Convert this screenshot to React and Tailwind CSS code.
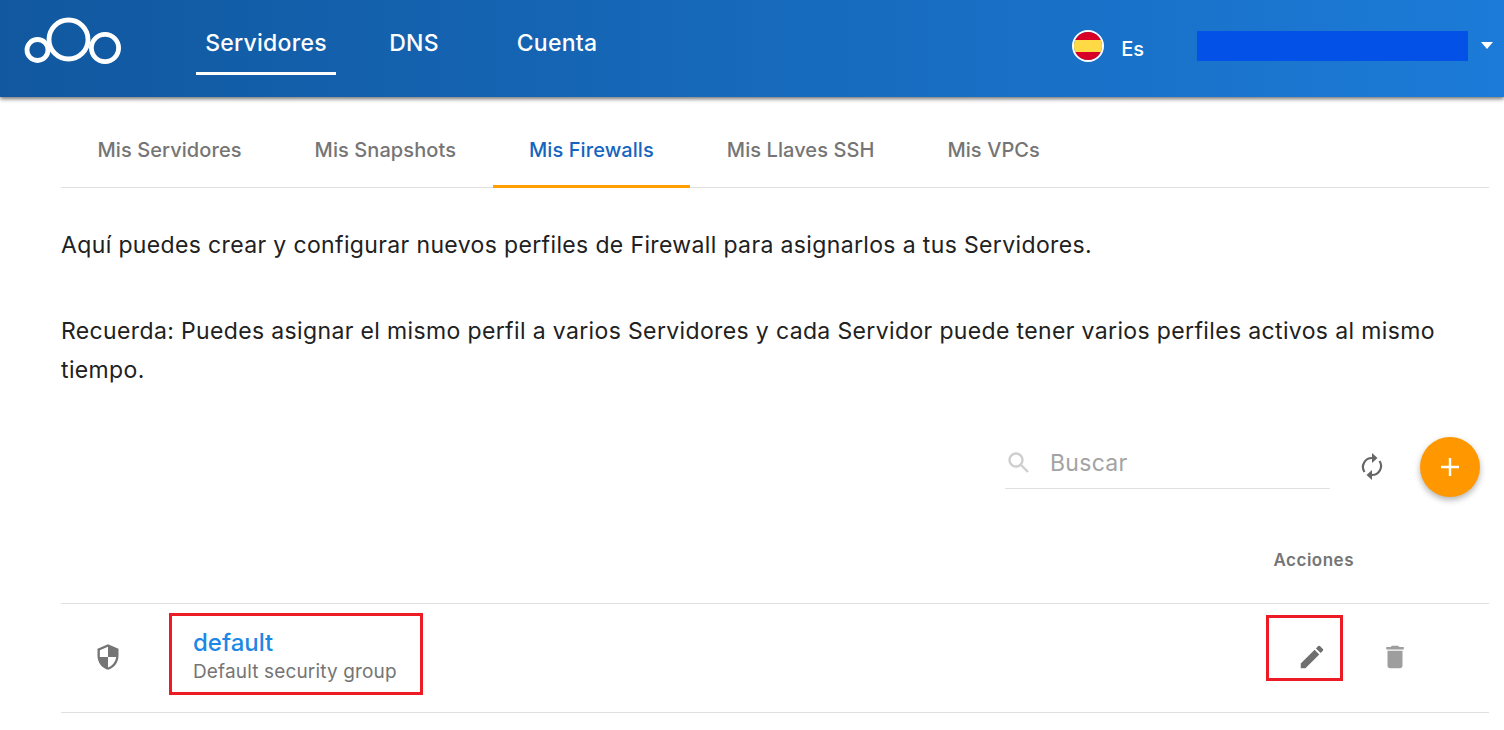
const tabs = ["Mis Servidores", "Mis Snapshots", "Mis Firewalls", "Mis Llaves SSH", "Mis VPCs"];

function Logo() {
  return (
    <svg width="98" height="50" viewBox="0 0 98 50" fill="none" stroke="#fff" strokeWidth="4.8">
      <circle cx="13.5" cy="35" r="10.5" />
      <circle cx="44.5" cy="24.5" r="19.5" />
      <circle cx="81" cy="33" r="13.6" />
    </svg>
  );
}

function Flag() {
  return (
    <div className="w-[32px] h-[32px] rounded-full border-2 border-white overflow-hidden flex flex-col">
      <div className="h-[8px] bg-[#d80027]" />
      <div className="flex-1 bg-[#ffda44]" />
      <div className="h-[8px] bg-[#d80027]" />
    </div>
  );
}

export default function App() {
  return (
    <div className="h-[730px] overflow-hidden bg-white font-['Inter',sans-serif]">
      <header className="h-[97px] flex bg-gradient-to-r from-[#11589f] to-[#1c7bd8] shadow-[0_2px_4px_rgba(0,0,0,0.55)] relative">
        <div className="ml-[24px] mt-[15px]">
          <Logo />
        </div>
        <nav className="ml-[74px] flex items-start text-white text-[23px] font-medium tracking-[0.25px]">
          <div className="w-[140px] h-[75px] border-b-[3px] border-white pt-[29px] leading-[28px] text-center">Servidores</div>
          <div className="w-[156px] h-[75px] pt-[29px] leading-[28px] text-center">DNS</div>
          <div className="w-[130px] h-[75px] pt-[29px] leading-[28px] text-center">Cuenta</div>
        </nav>
        <div className="ml-auto flex items-start pt-[30px] text-white">
          <Flag />
          <span className="ml-[17px] text-[20px] font-medium mt-[4px]">Es</span>
          <div className="ml-[53px] mt-[1px] w-[271px] h-[30px] bg-[#0351e6]" />
          <div className="ml-[13px] mr-[11px] mt-[12px] w-0 h-0 border-x-[6.5px] border-x-transparent border-t-[7px] border-t-white" />
        </div>
      </header>

      <main className="pl-[61px] pr-[15px]">
        <div className="flex border-b border-[#e0e0e0] h-[91px] items-stretch">
          {tabs.map((t) => (
            <div
              key={t}
              className={
                "px-[36.5px] pt-[38px] text-[20px] font-medium tracking-[0.08px] " +
                (t === "Mis Firewalls" ? "text-[#1565c0] border-b-[3px] border-[#ffa000] -mb-px" : "text-[#757575]")
              }
            >
              {t}
            </div>
          ))}
        </div>

        <div className="mt-[38px] pr-[50px] text-[23px] leading-[39px] tracking-[0.36px] text-[#212121]">
          <p>Aquí puedes crear y configurar nuevos perfiles de Firewall para asignarlos a tus Servidores.</p>
          <p className="mt-[47px]">
            Recuerda: Puedes asignar el mismo perfil a varios Servidores y cada Servidor puede tener varios perfiles activos al mismo tiempo.
          </p>
        </div>

        <div className="mt-[45px] mr-[9px] flex justify-end items-start">
          <div className="w-[325px] h-[54px] border-b border-[#e0e0e0] flex items-center">
            <svg width="24" height="24" viewBox="0 0 24 24" fill="none" stroke="#cfcfcf" strokeWidth="2.4" className="ml-[1px]">
              <circle cx="10" cy="10" r="6.5" />
              <path d="M15 15l7 7" />
            </svg>
            <span className="ml-[20px] mt-[3px] text-[23px] tracking-[0.3px] text-[#a3a3a3]">Buscar</span>
          </div>
          <svg width="22" height="27" viewBox="0 0 22 27" fill="none" stroke="#666" strokeWidth="2.2" className="ml-[31px] mt-[18px]">
            <path d="M3.5 19A9 9 0 0 1 11 5" />
            <path d="M18.5 8A9 9 0 0 1 11 22" />
            <path d="M11 0l5.5 5L11 10z" fill="#666" stroke="none" />
            <path d="M11 17l-5.5 5 5.5 5z" fill="#666" stroke="none" />
          </svg>
          <button className="ml-[37px] mt-[2px] w-[60px] h-[60px] rounded-full bg-[#ff9800] shadow-[0_3px_6px_rgba(0,0,0,0.3)] flex items-center justify-center">
            <svg width="20" height="20" viewBox="0 0 20 20" stroke="#fff" strokeWidth="2.4">
              <path d="M10 1v18M1 10h18" />
            </svg>
          </button>
        </div>

        <div className="mt-[51px] h-[56px] text-right pr-[135px] text-[17px] font-semibold tracking-[0.5px] text-[#757575]">Acciones</div>
      </main>

      <div className="ml-[61px] mr-[15px] -mt-px h-[110px] border-y border-[#e0e0e0] flex items-start">
        <svg width="28" height="30" viewBox="0 0 24 24" className="ml-[33px] mt-[38px]">
          <path fill="#757575" d="M12 1 3 5v6c0 5.55 3.84 10.74 9 12 5.16-1.26 9-6.45 9-12V5l-9-4zm0 10.99h7c-.53 4.12-3.28 7.79-7 8.94V12H5V6.3l7-3.11v8.8z" />
        </svg>
        <div className="ml-[47px] mt-[9px] w-[254px] h-[82px] border-[3px] border-[#ed1c24] pl-[21px] pt-[13px]">
          <div className="text-[24px] leading-[28px] font-medium text-[#1e88e5]">default</div>
          <div className="text-[19px] leading-[29px] tracking-[0.15px] text-[#757575]">Default security group</div>
        </div>
        <div className="ml-auto mt-[11px] w-[77px] h-[66px] border-[3px] border-[#ed1c24] flex items-center justify-center">
          <svg width="30" height="30" viewBox="0 0 24 24" fill="#6f6f6f" className="mt-[18px] ml-[14px]">
            <path d="M3 17.25V21h3.75L17.81 9.94l-3.75-3.75L3 17.25zM20.71 7.04a1 1 0 0 0 0-1.41l-2.34-2.34a1 1 0 0 0-1.41 0l-1.83 1.83 3.75 3.75 1.83-1.83z" />
          </svg>
        </div>
        <svg width="30" height="30" viewBox="0 0 24 24" fill="#9e9e9e" className="ml-[37px] mr-[79px] mt-[38px]">
          <path d="M6 19c0 1.1.9 2 2 2h8c1.1 0 2-.9 2-2V7H6v12zM19 4h-3.5l-1-1h-5l-1 1H5v2h14V4z" />
        </svg>
      </div>
    </div>
  );
}
